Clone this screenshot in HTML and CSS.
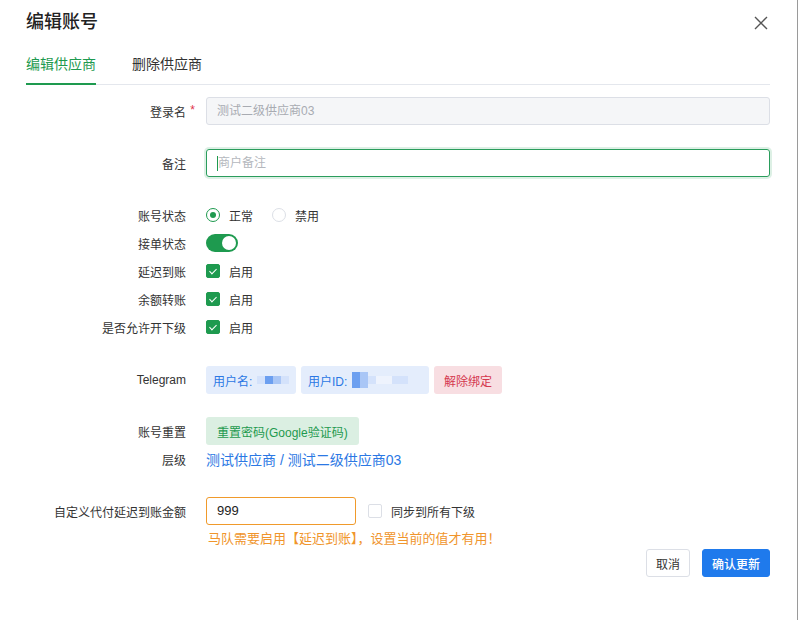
FILE: index.html
```html
<!DOCTYPE html>
<html lang="zh-CN">
<head>
  <meta charset="UTF-8">
  <meta name="viewport" content="width=device-width, initial-scale=1.0">
  <title>编辑账号</title>
  <link rel="stylesheet" href="styles.css">
</head>
<body>
  <div class="dialog">
    <!-- Header -->
    <div class="dialog-header">
      <h2 class="dialog-title">编辑账号</h2>
      <button class="close-btn" aria-label="关闭">
        <svg width="14" height="14" viewBox="0 0 14 14"><path d="M1 1L13 13M13 1L1 13" stroke="#555" stroke-width="1.4" fill="none"/></svg>
      </button>
    </div>

    <!-- Tabs -->
    <div class="tabs">
      <div class="tab active">编辑供应商</div>
      <div class="tab">删除供应商</div>
    </div>

    <div class="form">
      <div class="row first">
        <label class="label required">登录名</label>
        <div class="field"><div class="input disabled">测试二级供应商03</div></div>
      </div>

      <div class="row spaced">
        <label class="label">备注</label>
        <div class="field"><div class="input focused"><span class="caret"></span><span class="placeholder">商户备注</span></div></div>
      </div>

      <div class="row spaced">
        <label class="label">账号状态</label>
        <div class="field">
          <span class="radio checked"></span><span class="opt-text">正常</span>
          <span class="radio"></span><span class="opt-text">禁用</span>
        </div>
      </div>
      <div class="row">
        <label class="label">接单状态</label>
        <div class="field"><span class="switch on"><span class="knob"></span></span></div>
      </div>
      <div class="row">
        <label class="label">延迟到账</label>
        <div class="field"><span class="checkbox checked"></span><span class="opt-text">启用</span></div>
      </div>
      <div class="row">
        <label class="label">余额转账</label>
        <div class="field"><span class="checkbox checked"></span><span class="opt-text">启用</span></div>
      </div>
      <div class="row">
        <label class="label">是否允许开下级</label>
        <div class="field"><span class="checkbox checked"></span><span class="opt-text">启用</span></div>
      </div>

      <div class="row spaced tg">
        <label class="label">Telegram</label>
        <div class="field tags">
          <span class="tag blue name-tag">用户名:
            <span class="mosaic">
              <i class="px p1"></i><i class="px p3"></i><i class="px p2"></i><i class="px p1"></i>
            </span>
          </span>
          <span class="tag blue id-tag">用户ID:
            <span class="mosaic">
              <i class="px p3 tall"></i><i class="px p2 tall"></i><i class="px p1"></i><i class="px p0"></i><i class="px p0"></i><i class="px p1"></i><i class="px p1"></i>
            </span>
          </span>
          <span class="tag red">解除绑定</span>
        </div>
      </div>

      <div class="row reset">
        <label class="label">账号重置</label>
        <div class="field"><button class="btn-green">重置密码(Google验证码)</button></div>
      </div>
      <div class="row">
        <label class="label">层级</label>
        <div class="field"><a class="link">测试供应商 / 测试二级供应商03</a></div>
      </div>

      <div class="row spaced">
        <label class="label">自定义代付延迟到账金额</label>
        <div class="field">
          <div class="input amount">999</div>
          <span class="checkbox sync"></span><span class="opt-text">同步到所有下级</span>
        </div>
      </div>
      <div class="row warn-row">
        <span class="label"></span>
        <div class="field warn">马队需要启用【延迟到账】，设置当前的值才有用！</div>
      </div>

      <div class="footer">
        <button class="btn">取消</button>
        <button class="btn primary">确认更新</button>
      </div>
    </div>
  </div>
</body>
</html>
```

FILE: styles.css
```css
body {
  margin: 0;
  background: #fff;
  font-family: "Liberation Sans", "Noto Sans CJK SC", sans-serif;
  color: #333;
}

.dialog {
  width: 798px;
  height: 620px;
  border-right: 1px solid #9a9a9a;
  box-sizing: border-box;
  background: #fff;
}

.dialog-header {
  display: flex;
  align-items: center;
  justify-content: space-between;
  height: 40px;
  padding: 0 30px 0 26px;
}

.dialog-title {
  margin: 0;
  font-size: 18px;
  font-weight: 500;
  color: #222;
}

.close-btn {
  border: none;
  background: none;
  padding: 0;
  margin-top: 5px;
  margin-right: -1px;
  width: 14px;
  height: 14px;
  cursor: pointer;
}

/* tabs */
.tabs {
  display: flex;
  gap: 36px;
  margin: 5px 27px 0 26px;
  border-bottom: 1px solid #e4e7ed;
}

.tab {
  height: 38px;
  line-height: 38px;
  font-size: 14px;
  color: #333;
  border-bottom: 2px solid transparent;
  margin-bottom: -1px;
}

.tab.active {
  color: #1e9a4f;
  border-bottom-color: #1e9a4f;
}

/* form */
.form {
  margin: 0 27px 0 26px;
}

.row {
  display: grid;
  grid-template-columns: 160px 1fr;
  column-gap: 20px;
  align-items: center;
  min-height: 28px;
}

.row.first {
  margin-top: 12px;
}

.row.spaced {
  margin-top: 24px;
}

.row.tg {
  margin-top: 25px;
}

.row.reset {
  margin-top: 23px;
}

.label {
  text-align: right;
  font-size: 12px;
  color: #333;
  position: relative;
}

.label.required::after {
  content: "*";
  color: #e0344b;
  position: absolute;
  right: -9px;
  top: 0;
  font-size: 12px;
}

.field {
  display: flex;
  align-items: center;
  font-size: 12px;
}

.input {
  box-sizing: border-box;
  width: 100%;
  height: 28px;
  line-height: 26px;
  padding: 0 10px;
  border: 1px solid #dcdfe6;
  border-radius: 3px;
  font-size: 12px;
  display: flex;
  align-items: center;
}

.input.disabled {
  background: #f5f6f8;
  color: #a8abb2;
}

.input.focused {
  border-color: #2a9d5c;
  box-shadow: 0 0 0 2px rgba(30, 154, 79, 0.15);
}

.caret {
  width: 1px;
  height: 15px;
  background: #1e9a4f;
}

.placeholder {
  color: #b4b7bd;
}

.input.amount {
  width: 150px;
  border-color: #f09a2b;
  font-size: 13px;
  color: #222;
}

/* radio / checkbox / switch */
.radio {
  width: 14px;
  height: 14px;
  box-sizing: border-box;
  border: 1px solid #dcdfe6;
  border-radius: 50%;
  display: inline-flex;
  align-items: center;
  justify-content: center;
}

.radio.checked {
  border-color: #1e9a4f;
}

.radio.checked::after {
  content: "";
  width: 6px;
  height: 6px;
  border-radius: 50%;
  background: #1e9a4f;
}

.opt-text {
  margin-left: 9px;
  margin-right: 19px;
  font-size: 12px;
  color: #333;
}

.checkbox {
  width: 14px;
  height: 14px;
  box-sizing: border-box;
  border: 1px solid #dcdfe6;
  border-radius: 2px;
  position: relative;
  background: #fff;
}

.checkbox.checked {
  background: #1e9a4f;
  border-color: #1e9a4f;
}

.checkbox.checked::after {
  content: "";
  position: absolute;
  left: 4px;
  top: 2px;
  width: 3px;
  height: 6px;
  border: solid #fff;
  border-width: 0 1.5px 1.5px 0;
  transform: rotate(45deg);
}

.checkbox.sync {
  margin-left: 12px;
}

.switch {
  width: 32px;
  height: 18px;
  border-radius: 9px;
  background: #ccc;
  position: relative;
}

.switch.on {
  background: #1e9a4f;
}

.switch .knob {
  position: absolute;
  top: 2px;
  right: 2px;
  width: 14px;
  height: 14px;
  border-radius: 50%;
  background: #fff;
}

/* telegram tags */
.tags {
  gap: 5px;
}

.tag {
  height: 28px;
  box-sizing: border-box;
  padding: 0 7px;
  border-radius: 3px;
  display: inline-flex;
  align-items: center;
  font-size: 12px;
  white-space: nowrap;
  flex-shrink: 0;
}

.tag.blue {
  background: #e4edfc;
  color: #2b78e4;
}

.tag.red {
  padding: 0 10px;
  background: #f8dee2;
  color: #d5384f;
}

.name-tag {
  width: 90px;
}

.id-tag {
  width: 128px;
}

.mosaic {
  display: inline-flex;
  align-items: center;
  margin-left: 5px;
}

.px {
  display: inline-block;
  width: 8px;
  height: 8px;
}

.px.tall {
  height: 16px;
}

.p0 { background: #eef3fd; }
.p1 { background: #d4e2fb; }
.p2 { background: #a9c6f6; }
.p3 { background: #6c9ff0; }

/* buttons and links */
.btn-green {
  height: 28px;
  padding: 0 11px;
  border: none;
  border-radius: 3px;
  background: #dbefe2;
  color: #1e9a4f;
  font-size: 12px;
  font-family: inherit;
}

.link {
  color: #2b78e4;
  font-size: 14px;
  cursor: pointer;
}

.warn-row {
  min-height: 24px;
}

.warn {
  color: #f0952c;
  font-size: 13px;
  padding-left: 2px;
}

.footer {
  display: flex;
  justify-content: flex-end;
  gap: 12px;
}

.btn {
  height: 28px;
  padding: 0 9px;
  border: 1px solid #dcdfe6;
  border-radius: 3px;
  background: #fff;
  color: #333;
  font-size: 12px;
  font-family: inherit;
}

.btn.primary {
  background: #1f7aec;
  border-color: #1f7aec;
  color: #fff;
  font-weight: 500;
}
```
